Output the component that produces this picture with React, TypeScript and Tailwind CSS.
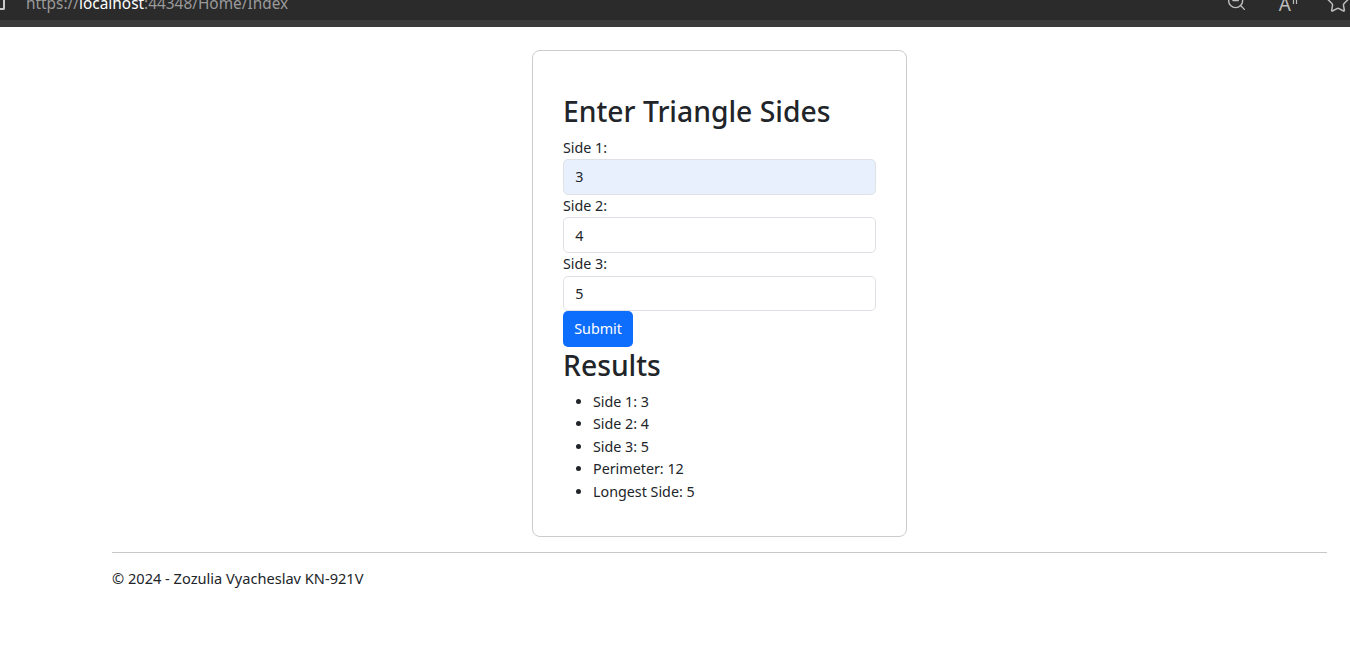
import { ZoomOut, Star } from "lucide-react"

const results = ["Side 1: 3", "Side 2: 4", "Side 3: 5", "Perimeter: 12", "Longest Side: 5"]

function Field({ label, value, filled }: { label: string; value: string; filled?: boolean }) {
    return (
        <>
            <label className="block">{label}</label>
            <input
                readOnly
                value={value}
                className={`block w-full h-[35.75px] px-[11.25px] border border-[#dee2e6] rounded-[5px] outline-none text-[#212529] ${filled ? "bg-[#e8f0fe]" : "bg-white"}`}
            />
        </>
    )
}

export default function App() {
    return (
        <div className="min-h-[652px] bg-white text-[14.3px] leading-[22.5px] text-[#212529] font-['Segoe_UI','Noto_Sans',sans-serif]">
            {/* browser chrome, cut off at the top */}
            <div className="h-[27px] bg-[#3b3b3b] overflow-hidden">
                <div className="h-[20px] bg-[#2b2b2b] flex items-start overflow-hidden text-[#bdbdbd]">
                    <div className="w-[5px] h-[10px] border-2 border-l-0 border-t-0 border-[#c8c8c8] rounded-br-[2px] shrink-0" />
                    <div className="ml-[21px] mt-[-4px] text-[15.4px] leading-none text-[#9a9a9a] whitespace-nowrap">
                        https://<span className="text-white">localhost</span>:44348/Home/Index
                    </div>
                    <div className="ml-auto flex items-start gap-[32px]">
                        <ZoomOut size={21} strokeWidth={1.6} className="mt-[-9px] shrink-0" />
                        <div className="flex items-start mt-[-5px]">
                            <span className="text-[19px] leading-none">A</span>
                            <svg width="6" height="8" viewBox="0 0 6 8" className="mt-[5px] ml-[1px]" stroke="currentColor" strokeWidth="1.2">
                                <line x1="1.5" y1="0" x2="1.5" y2="4" />
                                <line x1="4.5" y1="0" x2="4.5" y2="4" />
                            </svg>
                        </div>
                        <Star size={24} strokeWidth={1.5} className="mt-[-10px] ml-[-4px] shrink-0" />
                    </div>
                </div>
            </div>

            <div className="pl-[112px] pr-[23px]">
                <div className="flex justify-center pt-[23px]">
                    <div className="w-[375px] border border-[#ccc] rounded-[8px] px-[30px] pt-[42px] pb-[18px]">
                        <h2 className="text-[28.3px] leading-[36px] font-medium mb-[7.5px]">Enter Triangle Sides</h2>
                        <Field label="Side 1:" value="3" filled />
                        <Field label="Side 2:" value="4" />
                        <Field label="Side 3:" value="5" />
                        <button className="h-[35.75px] px-[11.25px] bg-[#0d6efd] text-white rounded-[5px]">Submit</button>
                        <h2 className="text-[28.3px] leading-[36px] font-medium mb-[7.5px]">Results</h2>
                        <ul className="list-disc pl-[30px] mb-[15px]">
                            {results.map((r) => (
                                <li key={r}>{r}</li>
                            ))}
                        </ul>
                    </div>
                </div>
                <footer className="mt-[15px] border-t border-[#c8c8c8] pt-[14px] text-[14.6px] text-[#212529]">
                    © 2024 - Zozulia Vyacheslav KN-921V
                </footer>
            </div>
        </div>
    )
}
